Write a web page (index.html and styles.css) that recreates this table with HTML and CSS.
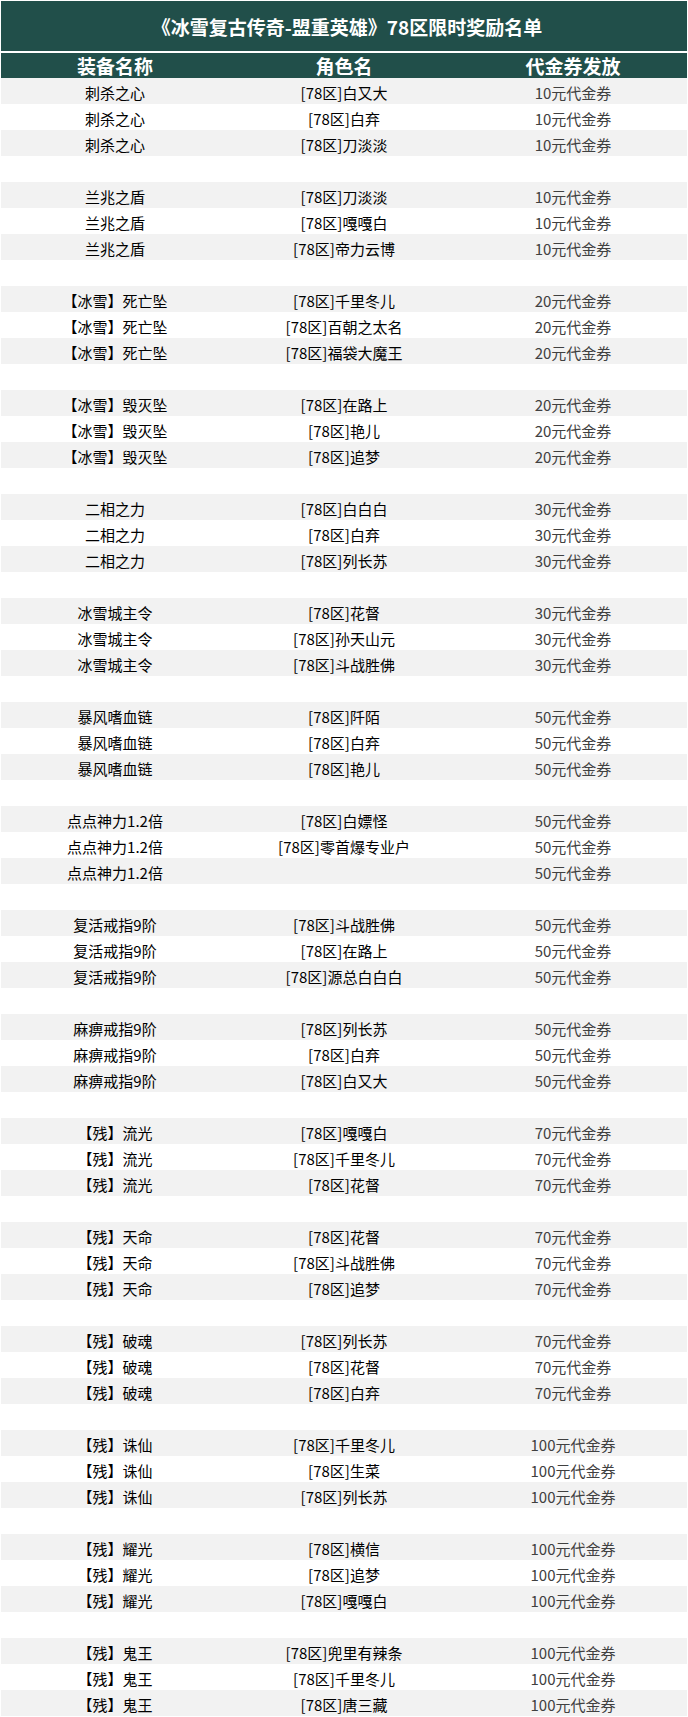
FILE: index.html
```html
<!DOCTYPE html>
<html lang="zh-CN">
<head>
<meta charset="utf-8">
<title>78区限时奖励名单</title>
<link rel="stylesheet" href="styles.css">
</head>
<body>
<div class="sheet">
  <div class="title">《冰雪复古传奇-盟重英雄》78区限时奖励名单</div>
  <div class="head">
    <div>装备名称</div><div>角色名</div><div>代金券发放</div>
  </div>
  <div class="rows">
    <div class="row"><span>刺杀之心</span><span>[78区]白又大</span><span class="v">10元代金券</span></div>
    <div class="row"><span>刺杀之心</span><span>[78区]白弃</span><span class="v">10元代金券</span></div>
    <div class="row"><span>刺杀之心</span><span>[78区]刀淡淡</span><span class="v">10元代金券</span></div>
    <div class="row"></div>
    <div class="row"><span>兰兆之盾</span><span>[78区]刀淡淡</span><span class="v">10元代金券</span></div>
    <div class="row"><span>兰兆之盾</span><span>[78区]嘎嘎白</span><span class="v">10元代金券</span></div>
    <div class="row"><span>兰兆之盾</span><span>[78区]帝力云博</span><span class="v">10元代金券</span></div>
    <div class="row"></div>
    <div class="row"><span>【冰雪】死亡坠</span><span>[78区]千里冬儿</span><span class="v">20元代金券</span></div>
    <div class="row"><span>【冰雪】死亡坠</span><span>[78区]百朝之太名</span><span class="v">20元代金券</span></div>
    <div class="row"><span>【冰雪】死亡坠</span><span>[78区]福袋大魔王</span><span class="v">20元代金券</span></div>
    <div class="row"></div>
    <div class="row"><span>【冰雪】毁灭坠</span><span>[78区]在路上</span><span class="v">20元代金券</span></div>
    <div class="row"><span>【冰雪】毁灭坠</span><span>[78区]艳儿</span><span class="v">20元代金券</span></div>
    <div class="row"><span>【冰雪】毁灭坠</span><span>[78区]追梦</span><span class="v">20元代金券</span></div>
    <div class="row"></div>
    <div class="row"><span>二相之力</span><span>[78区]白白白</span><span class="v">30元代金券</span></div>
    <div class="row"><span>二相之力</span><span>[78区]白弃</span><span class="v">30元代金券</span></div>
    <div class="row"><span>二相之力</span><span>[78区]列长苏</span><span class="v">30元代金券</span></div>
    <div class="row"></div>
    <div class="row"><span>冰雪城主令</span><span>[78区]花督</span><span class="v">30元代金券</span></div>
    <div class="row"><span>冰雪城主令</span><span>[78区]孙天山元</span><span class="v">30元代金券</span></div>
    <div class="row"><span>冰雪城主令</span><span>[78区]斗战胜佛</span><span class="v">30元代金券</span></div>
    <div class="row"></div>
    <div class="row"><span>暴风嗜血链</span><span>[78区]阡陌</span><span class="v">50元代金券</span></div>
    <div class="row"><span>暴风嗜血链</span><span>[78区]白弃</span><span class="v">50元代金券</span></div>
    <div class="row"><span>暴风嗜血链</span><span>[78区]艳儿</span><span class="v">50元代金券</span></div>
    <div class="row"></div>
    <div class="row"><span>点点神力1.2倍</span><span>[78区]白嫖怪</span><span class="v">50元代金券</span></div>
    <div class="row"><span>点点神力1.2倍</span><span>[78区]零首爆专业户</span><span class="v">50元代金券</span></div>
    <div class="row"><span>点点神力1.2倍</span><span></span><span class="v">50元代金券</span></div>
    <div class="row"></div>
    <div class="row"><span>复活戒指9阶</span><span>[78区]斗战胜佛</span><span class="v">50元代金券</span></div>
    <div class="row"><span>复活戒指9阶</span><span>[78区]在路上</span><span class="v">50元代金券</span></div>
    <div class="row"><span>复活戒指9阶</span><span>[78区]源总白白白</span><span class="v">50元代金券</span></div>
    <div class="row"></div>
    <div class="row"><span>麻痹戒指9阶</span><span>[78区]列长苏</span><span class="v">50元代金券</span></div>
    <div class="row"><span>麻痹戒指9阶</span><span>[78区]白弃</span><span class="v">50元代金券</span></div>
    <div class="row"><span>麻痹戒指9阶</span><span>[78区]白又大</span><span class="v">50元代金券</span></div>
    <div class="row"></div>
    <div class="row"><span>【残】流光</span><span>[78区]嘎嘎白</span><span class="v">70元代金券</span></div>
    <div class="row"><span>【残】流光</span><span>[78区]千里冬儿</span><span class="v">70元代金券</span></div>
    <div class="row"><span>【残】流光</span><span>[78区]花督</span><span class="v">70元代金券</span></div>
    <div class="row"></div>
    <div class="row"><span>【残】天命</span><span>[78区]花督</span><span class="v">70元代金券</span></div>
    <div class="row"><span>【残】天命</span><span>[78区]斗战胜佛</span><span class="v">70元代金券</span></div>
    <div class="row"><span>【残】天命</span><span>[78区]追梦</span><span class="v">70元代金券</span></div>
    <div class="row"></div>
    <div class="row"><span>【残】破魂</span><span>[78区]列长苏</span><span class="v">70元代金券</span></div>
    <div class="row"><span>【残】破魂</span><span>[78区]花督</span><span class="v">70元代金券</span></div>
    <div class="row"><span>【残】破魂</span><span>[78区]白弃</span><span class="v">70元代金券</span></div>
    <div class="row"></div>
    <div class="row"><span>【残】诛仙</span><span>[78区]千里冬儿</span><span class="v">100元代金券</span></div>
    <div class="row"><span>【残】诛仙</span><span>[78区]生菜</span><span class="v">100元代金券</span></div>
    <div class="row"><span>【残】诛仙</span><span>[78区]列长苏</span><span class="v">100元代金券</span></div>
    <div class="row"></div>
    <div class="row"><span>【残】耀光</span><span>[78区]横信</span><span class="v">100元代金券</span></div>
    <div class="row"><span>【残】耀光</span><span>[78区]追梦</span><span class="v">100元代金券</span></div>
    <div class="row"><span>【残】耀光</span><span>[78区]嘎嘎白</span><span class="v">100元代金券</span></div>
    <div class="row"></div>
    <div class="row"><span>【残】鬼王</span><span>[78区]兜里有辣条</span><span class="v">100元代金券</span></div>
    <div class="row"><span>【残】鬼王</span><span>[78区]千里冬儿</span><span class="v">100元代金券</span></div>
    <div class="row"><span>【残】鬼王</span><span>[78区]唐三藏</span><span class="v">100元代金券</span></div>
  </div>
</div>
</body>
</html>
```

FILE: styles.css
```css
* { box-sizing: border-box; }
html, body { margin: 0; padding: 0; background: #ffffff; }
body {
  font-family: "Noto Sans CJK SC", "Noto Sans", sans-serif;
}
.sheet {
  width: 688px;
  padding: 1px 1px 0 1px;
}
.title {
  height: 50px;
  background: #214f4a;
  color: #ffffff;
  font-weight: 700;
  font-size: 19px;
  display: flex;
  align-items: center;
  justify-content: center;
  padding-left: 6px;
  margin-bottom: 2px;
}
.head {
  height: 25px;
  background: #214f4a;
  color: #ffffff;
  font-weight: 700;
  font-size: 19px;
  display: grid;
  grid-template-columns: 228px 230px 228px;
  align-items: center;
  text-align: center;
  line-height: 25px;
}
.rows {
  display: grid;
  grid-auto-rows: 26px;
}
.row {
  display: grid;
  grid-template-columns: 228px 230px 228px;
  align-items: center;
  text-align: center;
  font-size: 15px;
  color: #000000;
  padding-top: 3px;
  line-height: 20px;
}
.row:nth-child(odd) { background: #f2f2f2; }
.row .v { color: #404040; }
```
